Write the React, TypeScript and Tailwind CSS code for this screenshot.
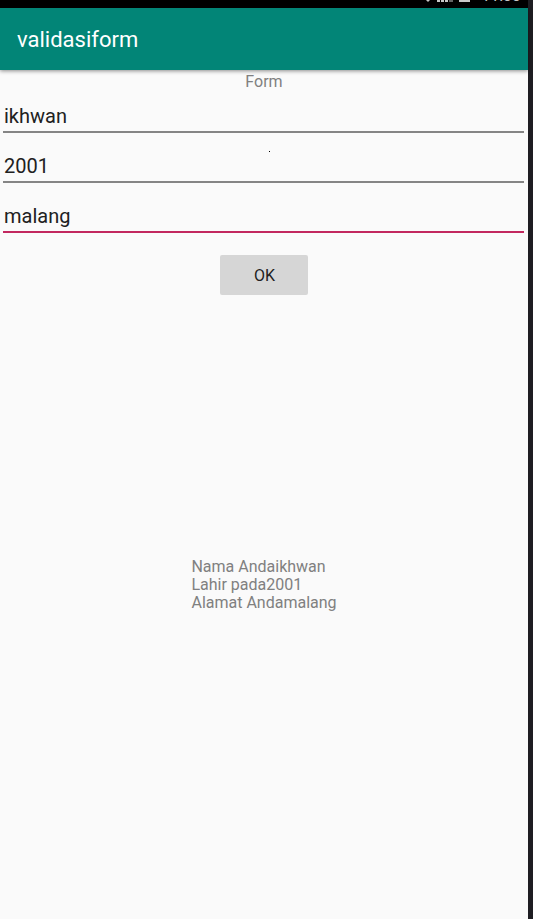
import { useState } from "react";
import type { FormEvent } from "react";

type FieldProps = {
  id: string;
  label: string;
  value: string;
  active?: boolean;
  onChange: (value: string) => void;
};

function Field({ id, label, value, active, onChange }: FieldProps) {
  return (
    <div className="h-[50px] pl-[3px] pr-1">
      <input
        id={id}
        type="text"
        aria-label={label}
        value={value}
        onChange={(e) => onChange(e.target.value)}
        className={`block h-[42px] w-full border-b-2 bg-transparent pt-[10px] pl-px text-[20px] text-[#212121] outline-none ${
          active ? "border-[#c2285f]" : "border-[#858585]"
        }`}
      />
    </div>
  );
}

function StatusBar() {
  return (
    <div className="flex h-2 items-end justify-end overflow-hidden bg-black pr-[7px] text-[#c8c8c8]">
      <svg width="48" height="8" viewBox="0 0 48 8" fill="#c8c8c8" className="mr-2" aria-hidden="true">
        <path d="M1 0h4L3 2z" />
        <path d="M12 0h3v2h-3zM16 0h3v2h-3zM20 0h3v2h-3z" />
        <path d="M24 0h4v2h-4z" opacity="0.5" />
        <path d="M34 0h11v2H34z" />
      </svg>
      <span className="pb-1 text-[16px] leading-[16px]">11:33</span>
    </div>
  );
}

export default function App() {
  const [name, setName] = useState("ikhwan");
  const [year, setYear] = useState("2001");
  const [address, setAddress] = useState("malang");
  const [result, setResult] = useState({ name, year, address });

  const submit = (e: FormEvent) => {
    e.preventDefault();
    setResult({ name, year, address });
  };

  return (
    <div className="min-h-screen bg-[#1e1d22] pr-[5px] font-[Roboto,sans-serif]">
      <div className="flex min-h-screen flex-col bg-[#fafafa]">
        <StatusBar />
        <header className="flex h-[62px] items-center bg-[#028577] px-[17px] shadow-[0_1px_4px_rgba(0,0,0,0.45)]">
          <h1 className="text-[22px] text-white">validasiform</h1>
        </header>
        <main className="flex flex-col">
          <form onSubmit={submit} className="relative flex flex-col">
            <h2 className="pt-[2px] text-center text-[16px] leading-[19px] text-[#808080]">Form</h2>
            <Field id="nama" label="Nama" value={name} onChange={setName} />
            <Field id="lahir" label="Lahir" value={year} onChange={setYear} />
            <Field id="alamat" label="Alamat" value={address} active onChange={setAddress} />
            <span className="absolute left-[269px] top-[81px] size-px bg-black" />
            <button
              type="submit"
              className="mt-[14px] h-10 w-[88px] self-center rounded-[2px] bg-[#d6d6d6] pt-px pl-px text-[16px] text-[#212121]"
            >
              OK
            </button>
          </form>
          <div className="mt-[263px] self-center text-[16px] leading-[18px] text-[#808080]">
            <p>Nama Anda{result.name}</p>
            <p>Lahir pada{result.year}</p>
            <p>Alamat Anda{result.address}</p>
          </div>
        </main>
      </div>
    </div>
  );
}
